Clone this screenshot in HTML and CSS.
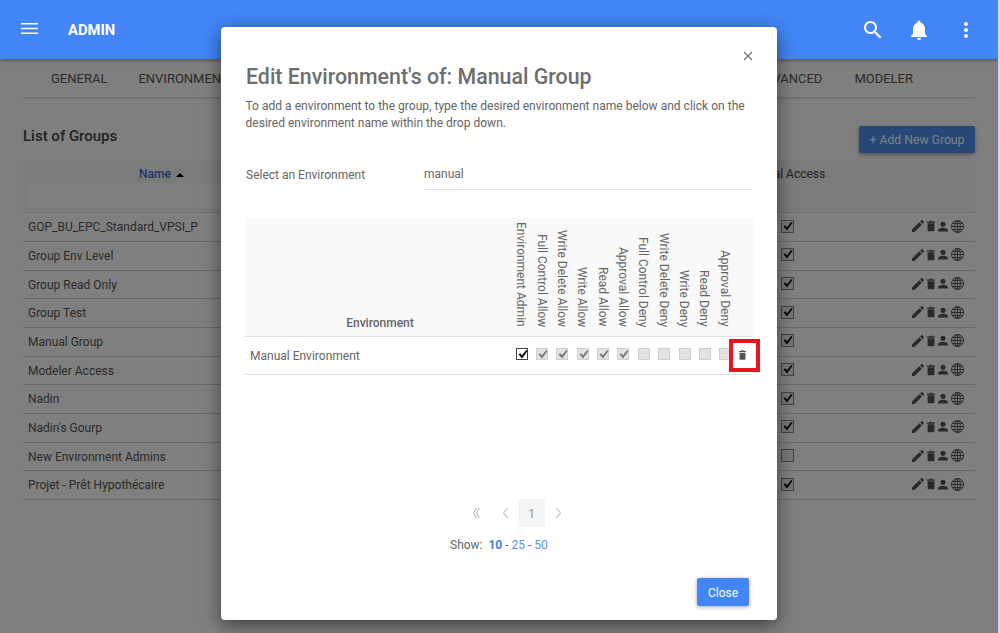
FILE: index.html
```html
<!DOCTYPE html>
<html lang="en">
<head>
<meta charset="utf-8">
<title>Admin - Groups</title>
<link rel="stylesheet" href="styles.css">
</head>
<body>
<svg class="defs" aria-hidden="true">
  <symbol id="i-edit" viewBox="3 3 18 18"><path d="M3 17.25V21h3.75L17.81 9.94l-3.75-3.75L3 17.25zM20.71 7.04c.39-.39.39-1.02 0-1.41l-2.34-2.34c-.39-.39-1.02-.39-1.41 0l-1.83 1.83 3.75 3.75 1.83-1.83z"/></symbol>
  <symbol id="i-trash" viewBox="0 0 9 12"><path d="M3 0h3l.4.8H9v1.5H0V.8h2.6zM.7 3h7.6v8c0 .6-.4 1-1 1H1.7c-.6 0-1-.4-1-1z"/></symbol>
  <symbol id="i-user" viewBox="0 0 11 11"><circle cx="5.5" cy="3" r="2.8"/><path d="M0 11V9.6c0-1.6 3.2-2.8 5.5-2.8s5.5 1.2 5.5 2.8V11z"/></symbol>
  <symbol id="i-globe" viewBox="0 0 13 13"><g fill="none" stroke="currentColor" stroke-width="1"><circle cx="6.5" cy="6.5" r="6"/><ellipse cx="6.5" cy="6.5" rx="2.8" ry="6"/><path d="M6.5.5v12M.5 6.5h12M1.5 3.4h10M1.5 9.6h10"/></g></symbol>
  <symbol id="i-check" viewBox="0 0 13 13"><path d="M2.6 6.6l1.5-1.4 1.9 2L10.2 1.9l1.3 1.2L6 10.4z"/></symbol>
</svg>

<div class="page">
  <header class="topbar">
    <svg class="menu" viewBox="0 0 17 11"><path d="M0 0h17v1.4H0zM0 4.8h17v1.4H0zM0 9.6h17v1.4H0z"/></svg>
    <span class="brand">ADMIN</span>
    <div class="top-icons">
      <svg viewBox="0 0 24 24"><path d="M15.5 14h-.79l-.28-.27C15.41 12.59 16 11.11 16 9.5 16 5.91 13.09 3 9.5 3S3 5.91 3 9.5 5.91 16 9.5 16c1.61 0 3.09-.59 4.23-1.57l.27.28v.79l5 4.99L20.49 19l-4.99-5zm-6 0C7.01 14 5 11.99 5 9.5S7.01 5 9.5 5 14 7.01 14 9.5 11.99 14 9.5 14z"/></svg>
      <svg viewBox="0 0 24 24"><path d="M12 22c1.1 0 2-.9 2-2h-4c0 1.1.89 2 2 2zm6-6v-5c0-3.07-1.64-5.64-4.5-6.32V4c0-.83-.67-1.5-1.5-1.5s-1.5.67-1.5 1.5v.68C7.63 5.36 6 7.92 6 11v5l-2 2v1h16v-1l-2-2z"/></svg>
      <svg class="more" viewBox="0 0 24 24"><path d="M12 8c1.1 0 2-.9 2-2s-.9-2-2-2-2 .9-2 2 .9 2 2 2zm0 2c-1.1 0-2 .9-2 2s.9 2 2 2 2-.9 2-2-.9-2-2-2zm0 6c-1.1 0-2 .9-2 2s.9 2 2 2 2-.9 2-2-.9-2-2-2z"/></svg>
    </div>
  </header>

  <main class="content">
    <nav class="tabs">
      <a>GENERAL</a><a class="tab-env">ENVIRONMENTS</a><a class="tab-push">ADVANCED</a><a>MODELER</a>
    </nav>
    <div class="title-row">
      <h2>List of Groups</h2>
      <button class="add-btn">+ Add New Group</button>
    </div>
    <section class="groups">
      <div class="g-head">
        <div class="g-name-col">
          <div class="g-name-title">Name <i class="sort"></i></div>
          <div class="g-filter"></div>
        </div>
        <div class="g-access-title">Global Access</div>
      </div>
      <div class="g-row"><span>GOP_BU_EPC_Standard_VPSI_P</span><b class="cb on"><svg><use href="#i-check"/></svg></b><div class="acts"><svg class="a-e"><use href="#i-edit"/></svg><svg class="a-t"><use href="#i-trash"/></svg><svg class="a-u"><use href="#i-user"/></svg><svg class="a-g"><use href="#i-globe"/></svg></div></div>
      <div class="g-row"><span>Group Env Level</span><b class="cb on"><svg><use href="#i-check"/></svg></b><div class="acts"><svg class="a-e"><use href="#i-edit"/></svg><svg class="a-t"><use href="#i-trash"/></svg><svg class="a-u"><use href="#i-user"/></svg><svg class="a-g"><use href="#i-globe"/></svg></div></div>
      <div class="g-row"><span>Group Read Only</span><b class="cb on"><svg><use href="#i-check"/></svg></b><div class="acts"><svg class="a-e"><use href="#i-edit"/></svg><svg class="a-t"><use href="#i-trash"/></svg><svg class="a-u"><use href="#i-user"/></svg><svg class="a-g"><use href="#i-globe"/></svg></div></div>
      <div class="g-row"><span>Group Test</span><b class="cb on"><svg><use href="#i-check"/></svg></b><div class="acts"><svg class="a-e"><use href="#i-edit"/></svg><svg class="a-t"><use href="#i-trash"/></svg><svg class="a-u"><use href="#i-user"/></svg><svg class="a-g"><use href="#i-globe"/></svg></div></div>
      <div class="g-row"><span>Manual Group</span><b class="cb on"><svg><use href="#i-check"/></svg></b><div class="acts"><svg class="a-e"><use href="#i-edit"/></svg><svg class="a-t"><use href="#i-trash"/></svg><svg class="a-u"><use href="#i-user"/></svg><svg class="a-g"><use href="#i-globe"/></svg></div></div>
      <div class="g-row"><span>Modeler Access</span><b class="cb on"><svg><use href="#i-check"/></svg></b><div class="acts"><svg class="a-e"><use href="#i-edit"/></svg><svg class="a-t"><use href="#i-trash"/></svg><svg class="a-u"><use href="#i-user"/></svg><svg class="a-g"><use href="#i-globe"/></svg></div></div>
      <div class="g-row"><span>Nadin</span><b class="cb on"><svg><use href="#i-check"/></svg></b><div class="acts"><svg class="a-e"><use href="#i-edit"/></svg><svg class="a-t"><use href="#i-trash"/></svg><svg class="a-u"><use href="#i-user"/></svg><svg class="a-g"><use href="#i-globe"/></svg></div></div>
      <div class="g-row"><span>Nadin's Gourp</span><b class="cb on"><svg><use href="#i-check"/></svg></b><div class="acts"><svg class="a-e"><use href="#i-edit"/></svg><svg class="a-t"><use href="#i-trash"/></svg><svg class="a-u"><use href="#i-user"/></svg><svg class="a-g"><use href="#i-globe"/></svg></div></div>
      <div class="g-row"><span>New Environment Admins</span><b class="cb"></b><div class="acts"><svg class="a-e"><use href="#i-edit"/></svg><svg class="a-t"><use href="#i-trash"/></svg><svg class="a-u"><use href="#i-user"/></svg><svg class="a-g"><use href="#i-globe"/></svg></div></div>
      <div class="g-row"><span>Projet - Prêt Hypothécaire</span><b class="cb on"><svg><use href="#i-check"/></svg></b><div class="acts"><svg class="a-e"><use href="#i-edit"/></svg><svg class="a-t"><use href="#i-trash"/></svg><svg class="a-u"><use href="#i-user"/></svg><svg class="a-g"><use href="#i-globe"/></svg></div></div>
    </section>
  </main>

  <div class="backdrop"></div>

  <div class="modal" role="dialog">
    <div class="close-row"><svg viewBox="0 0 10 10"><path d="M1 1l8 8M9 1l-8 8"/></svg></div>
    <h1>Edit Environment's of: Manual Group</h1>
    <p class="desc">To add a environment to the group, type the desired environment name below and click on the desired environment name within the drop down.</p>
    <div class="select-row">
      <label>Select an Environment</label>
      <div class="fake-input">manual</div>
    </div>
    <div class="env-table">
      <div class="env-head">
        <div class="env-title">Environment</div>
        <div class="vh">Environment Admin</div>
        <div class="vh">Full Control Allow</div>
        <div class="vh">Write Delete Allow</div>
        <div class="vh">Write Allow</div>
        <div class="vh">Read Allow</div>
        <div class="vh">Approval Allow</div>
        <div class="vh">Full Control Deny</div>
        <div class="vh">Write Delete Deny</div>
        <div class="vh">Write Deny</div>
        <div class="vh">Read Deny</div>
        <div class="vh">Approval Deny</div>
        <div></div>
      </div>
      <div class="env-row">
        <div class="env-name">Manual Environment</div>
        <div class="cell"><b class="cx live"><svg><use href="#i-check"/></svg></b></div>
        <div class="cell"><b class="cx"><svg><use href="#i-check"/></svg></b></div>
        <div class="cell"><b class="cx"><svg><use href="#i-check"/></svg></b></div>
        <div class="cell"><b class="cx"><svg><use href="#i-check"/></svg></b></div>
        <div class="cell"><b class="cx"><svg><use href="#i-check"/></svg></b></div>
        <div class="cell"><b class="cx"><svg><use href="#i-check"/></svg></b></div>
        <div class="cell"><b class="cx"></b></div>
        <div class="cell"><b class="cx"></b></div>
        <div class="cell"><b class="cx"></b></div>
        <div class="cell"><b class="cx"></b></div>
        <div class="cell"><b class="cx"></b></div>
        <div class="cell trash-cell"><svg class="row-trash"><use href="#i-trash"/></svg><span class="callout"></span></div>
      </div>
    </div>
    <div class="modal-foot">
      <div class="pager">
        <svg class="p-first" viewBox="0 0 16 12"><path d="M7.5 1L4.5 6l3 5M10.5 1L7.5 6l3 5"/></svg>
        <svg class="p-prev" viewBox="0 0 16 12"><path d="M10 1L5.5 6l4.5 5"/></svg>
        <span class="p-num">1</span>
        <svg class="p-next" viewBox="0 0 16 12"><path d="M6 1l4.5 5L6 11"/></svg>
      </div>
      <div class="show">Show:&nbsp; <a class="cur">10</a> - <a>25</a> - <a>50</a></div>
      <button class="close-btn">Close</button>
    </div>
  </div>
</div>
</body>
</html>
```
FILE: styles.css
```css
* { box-sizing: border-box; }
html, body { margin: 0; height: 100%; }
body {
  background: #c6d9f6;
  font-family: Roboto, "Liberation Sans", sans-serif;
  font-size: 12px;
  color: #555;
  overflow: hidden;
}
.defs { display: none; }
.page { position: relative; width: 998px; height: 633px; background: #fff; overflow: hidden; }

.topbar {
  position: relative;
  z-index: 2;
  height: 59px;
  background: #4285f4;
  display: flex;
  align-items: center;
  padding: 0 20px 0 21px;
  color: #fff;
  box-shadow: 0 1px 4px rgba(0,0,0,.4);
}
.menu { width: 17px; height: 11px; fill: #fff; margin-top: -2px; }
.brand { margin-left: 30px; font-size: 14.8px; font-weight: 700; }
.top-icons { margin-left: auto; display: flex; gap: 22px; }
.top-icons svg { width: 24px; height: 24px; fill: #fff; }
.top-icons .more { margin-left: 1px; }

.content { padding: 0 23px; }
.tabs {
  height: 40px;
  border-bottom: 2px solid #e3e3e3;
  display: flex;
  align-items: center;
  padding: 0 62px 0 28px;
  gap: 32px;
  font-size: 13px;
  color: #555;
}
.tab-env { margin-left: -1px; }
.tab-push { margin-left: auto; }
.title-row { display: flex; justify-content: space-between; align-items: flex-start; margin-top: 27px; }
.title-row h2 { margin: 0; font-size: 15px; line-height: 21px; font-weight: 500; color: #444; }
.add-btn {
  width: 116px; height: 27px; border: 0; border-radius: 2px;
  background: #4a90f0; color: #fff; font: 12.2px Roboto, sans-serif;
  box-shadow: 0 2px 4px rgba(0,0,0,.35);
}
.groups { margin-top: 8px; }
.g-head { height: 52.4px; background: #f7f7f7; display: flex; border-bottom: 1px solid #ddd; }
.g-name-col { width: 726px; padding: 6px 0 0 5px; }
.g-name-title { height: 14px; line-height: 14px; padding-left: 111px; color: #3a6fd8; font-weight: 500; white-space: nowrap; }
.sort { display: inline-block; width: 0; height: 0; border: 4px solid transparent; border-top: 0; border-bottom: 4px solid #000; margin-left: 2px; vertical-align: 1px; }
.g-filter { height: 25px; margin-top: 2px; background: #fff; }
.g-access-title { width: 76px; padding-top: 6px; line-height: 14px; color: #444; white-space: nowrap; }
.g-row {
  height: 28.68px;
  border-bottom: 1px solid #d4d4d4;
  display: flex;
  align-items: center;
  padding-left: 5px;
  color: #555;
}
.g-row > span { width: 753px; }
.cb { width: 13px; height: 13px; border: 1px solid #888; background: #eee; display: block; position: relative; margin-top: -2px; }
.cb svg, .cx svg { position: absolute; left: -1px; top: -1px; width: 13px; height: 13px; fill: #111; }
.acts { margin-left: 118px; display: flex; align-items: center; color: #555; margin-top: -2px; }
.acts svg { fill: #555; display: block; }
.a-e { width: 12px; height: 12px; }
.a-t { width: 8px; height: 12px; margin-left: 3px; }
.a-u { width: 10px; height: 11px; margin-left: 3px; }
.a-g { width: 13px; height: 13px; margin-left: 3px; }

.backdrop { position: absolute; inset: 0; z-index: 1; background: rgba(0,0,0,.5); }

.modal {
  position: absolute;
  z-index: 3;
  left: 221px; top: 27px;
  width: 556px; height: 593px;
  background: #fff;
  border-radius: 4px;
  box-shadow: 0 5px 18px rgba(0,0,0,.5);
  padding: 24px 24px 14px 24px;
  display: flex;
  flex-direction: column;
  color: #666;
}
.close-row { height: 10px; display: flex; justify-content: flex-end; }
.close-row svg { width: 10px; height: 10px; stroke: #777; stroke-width: 1.3; fill: none; }
.modal h1 { margin: 2px 0 0 1px; font-size: 21.35px; line-height: 28px; font-weight: 500; color: #6e6e6e; }
.desc { margin: 7px 0 0 .5px; font-size: 12.06px; line-height: 17px; color: #666; }
.select-row { margin-top: 27px; display: flex; height: 31px; }
.select-row label { width: 179px; padding-left: 1px; line-height: 32px; }
.fake-input { flex: 1; border-bottom: 1px solid #e2e2e2; line-height: 30px; color: #666; }
.env-table { margin-top: 28px; }
.env-head { display: grid; grid-template-columns: 266px repeat(11, 20.36px) 1fr; height: 119px; background: #f9f9f9; border-bottom: 1px solid #e2e2e2; }
.env-title { align-self: end; text-align: center; font-weight: 500; padding: 0 0 6px 4px; color: #666; line-height: 14px; }
.vh {
  writing-mode: vertical-rl;
  justify-self: center;
  align-self: end;
  padding-bottom: 9px;
  line-height: 14px;
  white-space: nowrap;
  color: #666;
}
.env-row { display: grid; grid-template-columns: 266.5px repeat(11, 20.36px) 1fr; height: 38px; border-bottom: 1px solid #e2e2e2; align-items: center; }
.env-name { padding-left: 5px; }
.cell { display: flex; justify-content: center; position: relative; }
.cx { width: 12px; height: 12px; background: #e2e2e2; border: 1px solid #d0d0d0; display: block; position: relative; margin-top: -4px; }
.cx svg { fill: #777; }
.cx.live { background: #fff; border: 1px solid #444; }
.cx.live svg { fill: #000; }
.trash-cell { align-self: stretch; align-items: center; justify-content: flex-start; padding-left: 3.6px; }
.row-trash { width: 7px; height: 10px; fill: #555; margin-top: -1px; }
.callout { position: absolute; left: -6.5px; top: 2px; width: 31px; height: 33px; border: 4px solid #e8141f; }

.modal-foot { margin-top: auto; display: flex; flex-direction: column; }
.pager { display: flex; align-items: center; height: 28px; padding-left: 224px; }
.pager svg { width: 16px; height: 12px; fill: none; stroke: #aaa; stroke-width: 1; }
.p-first { margin-right: 13px; }
.p-prev { margin-right: 4px; }
.p-num { width: 27px; height: 28px; background: #f5f5f5; color: #999; text-align: center; line-height: 30px; }
.p-next { margin-left: 5px; }
.show { margin-top: 10px; height: 16px; line-height: 16px; padding-left: 205px; color: #666; }
.show a { color: #5a8df0; }
.show .cur { color: #3f7ef0; font-weight: 700; }
.close-btn {
  align-self: flex-end;
  margin: 25px 4px 0 0;
  width: 52px; height: 28px;
  padding-top: 2px;
  background: #4285f4; color: #fff; border: 0; border-radius: 2px;
  font: 12px Roboto, sans-serif;
  box-shadow: 0 1px 4px rgba(0,0,0,.35);
}
```
